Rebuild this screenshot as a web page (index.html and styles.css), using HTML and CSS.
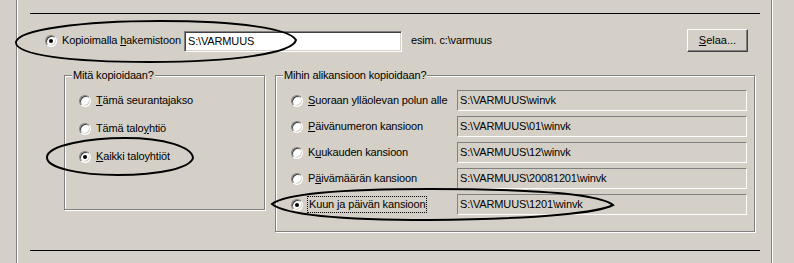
FILE: index.html
```html
<!DOCTYPE html>
<html lang="fi">
<head>
  <meta charset="UTF-8">
  <title>Varmuuskopiointi</title>
  <link rel="stylesheet" href="styles.css">
</head>
<body>

<div class="frame">
  <div class="frame-inner">
    <div class="rule"></div>

    <div class="top-row">
      <span class="radio checked"></span>
      <span class="label path-label">Kopioimalla <u>h</u>akemistoon</span>
      <div class="input">S:\VARMUUS</div>
      <span class="hint">esim. c:\varmuus</span>
      <button class="btn"><u>S</u>elaa...</button>
    </div>

    <div class="groups">
      <div class="group group-what">
        <div class="group-title">Mitä kopioidaan?</div>
        <div class="choices">
          <div class="choice"><span class="radio"></span><span class="label"><u>T</u>ämä seurantajakso</span></div>
          <div class="choice"><span class="radio"></span><span class="label">Tämä talo<u>y</u>htiö</span></div>
          <div class="choice"><span class="radio checked"></span><span class="label"><u>K</u>aikki taloyhtiöt</span></div>
        </div>
      </div>

      <div class="group group-where">
        <div class="group-title">Mihin alikansioon kopioidaan?</div>
        <div class="folders">
          <div class="folder">
            <div class="folder-opt"><span class="radio"></span><span class="label"><u>S</u>uoraan ylläolevan polun alle</span></div>
            <div class="field">S:\VARMUUS\winvk</div>
          </div>
          <div class="folder">
            <div class="folder-opt"><span class="radio"></span><span class="label"><u>P</u>äivänumeron kansioon</span></div>
            <div class="field">S:\VARMUUS\01\winvk</div>
          </div>
          <div class="folder">
            <div class="folder-opt"><span class="radio"></span><span class="label">K<u>u</u>ukauden kansioon</span></div>
            <div class="field">S:\VARMUUS\12\winvk</div>
          </div>
          <div class="folder">
            <div class="folder-opt"><span class="radio"></span><span class="label">P<u>ä</u>ivämäärän kansioon</span></div>
            <div class="field">S:\VARMUUS\20081201\winvk</div>
          </div>
          <div class="folder">
            <div class="folder-opt"><span class="radio checked"></span><span class="label focused">Kuun <u>j</u>a päivän kansioon</span></div>
            <div class="field">S:\VARMUUS\1201\winvk</div>
          </div>
        </div>
      </div>
    </div>

    <div class="rule rule-bottom"></div>
  </div>
</div>

<!-- käsin piirretyt korostukset -->
<svg class="marks" width="794" height="263" viewBox="0 0 794 263">
  <path d="M16,42 C18,30 80,21 160,21 C240,21 290,29 296,40 C293,53 235,62 150,62 C70,62 15,55 16,42 Z" />
  <path d="M47,157 C48,145 90,138 125,138 C165,138 192,147 193,158 C190,168 160,175 118,175 C80,175 46,168 47,157 Z" />
  <path d="M272,204 C285,194 335,189 430,189 C530,189 600,194 613,205 C600,212 545,219 430,220 C335,220 284,214 272,204 Z" />
</svg>

</body>
</html>
```

FILE: styles.css
```css
body {
  margin: 0;
  width: 794px;
  height: 263px;
  overflow: hidden;
  position: relative;
  background: #d4d0c8;
  font-family: "Liberation Sans", Arial, sans-serif;
  font-size: 11px;
  line-height: 13px;
  color: #000;
}

u {
  text-decoration-thickness: 1px;
  text-underline-offset: 1px;
}

.frame {
  margin-left: 16px;
  width: 757px;
  height: 263px;
  box-sizing: border-box;
  border-left: 1px solid #808080;
  border-right: 1px solid #fff;
}

.frame-inner {
  height: 100%;
  box-sizing: border-box;
  border-left: 1px solid #fff;
  border-right: 1px solid #808080;
  padding: 13px 0 0 12px;
}

.rule {
  width: 730px;
  height: 1px;
  background: #000;
}

.rule-bottom {
  margin-top: 18px;
}

/* yläriviltä polku */
.top-row {
  display: flex;
  align-items: center;
  width: 730px;
  height: 23px;
  margin-top: 15px;
}

.top-row .radio {
  margin-left: 15px;
}

.label {
  white-space: nowrap;
  letter-spacing: -0.15px;
}

.path-label {
  width: 122px;
  margin-left: 5px;
}

.input {
  width: 218px;
  height: 21px;
  box-sizing: border-box;
  align-self: flex-end;
  background: #fff;
  border: 1px solid;
  border-color: #808080 #fff #fff #808080;
  box-shadow: inset 1px 1px 0 #404040, inset -1px -1px 0 #d4d0c8;
  padding: 3px 0 0 3px;
  letter-spacing: -0.15px;
}

.hint {
  margin-left: 9px;
  letter-spacing: -0.15px;
}

.btn {
  margin-left: auto;
  margin-right: 12px;
  width: 61px;
  height: 23px;
  box-sizing: border-box;
  background: #d4d0c8;
  border: 1px solid;
  border-color: #fff #404040 #404040 #fff;
  box-shadow: inset -1px -1px 0 #808080;
  font: inherit;
  color: #000;
  padding: 0;
}

/* radionapit */
.radio {
  flex: 0 0 auto;
  position: relative;
  width: 12px;
  height: 12px;
  box-sizing: border-box;
  border-radius: 50%;
  border: 1px solid;
  border-color: #808080 #fff #fff #808080;
  background: #fff;
  box-shadow: inset 1px 1px 0 #404040, inset -1px -1px 0 #d4d0c8;
}

.radio.checked::after {
  content: "";
  position: absolute;
  left: 3px;
  top: 3px;
  width: 4px;
  height: 4px;
  border-radius: 50%;
  background: #000;
}

/* ryhmät */
.groups {
  display: flex;
  align-items: flex-start;
  margin-top: 23px;
  margin-left: 34px;
}

.group {
  box-sizing: border-box;
  border: 1px solid #808080;
  box-shadow: 1px 1px 0 #fff, inset 1px 1px 0 #fff;
}

.group-title {
  width: fit-content;
  margin: -7px 0 0 7px;
  padding: 0 1px;
  background: #d4d0c8;
  letter-spacing: -0.15px;
}

.group-what {
  width: 201px;
  height: 135px;
}

.group-where {
  width: 480px;
  height: 157px;
  margin-left: 10px;
}

.choices {
  display: flex;
  flex-direction: column;
  gap: 15px;
  padding: 12px 0 0 14px;
}

.choice,
.folder-opt {
  display: flex;
  align-items: center;
  gap: 5px;
  height: 13px;
}

.folders {
  display: flex;
  flex-direction: column;
  gap: 5px;
  padding: 8px 0 0 15px;
}

.folder {
  display: flex;
  align-items: center;
}

.folder-opt {
  width: 166px;
}

.field {
  width: 290px;
  height: 21px;
  box-sizing: border-box;
  border: 1px solid;
  border-color: #808080 #fff #fff #808080;
  padding: 3px 0 0 2px;
  letter-spacing: -0.15px;
}

.focused {
  outline: 1px dotted #000;
  outline-offset: 1px;
  margin-left: 1px;
}

.marks {
  position: absolute;
  left: 0;
  top: 0;
  pointer-events: none;
}

.marks path {
  fill: none;
  stroke: #000;
  stroke-width: 2;
}
```
